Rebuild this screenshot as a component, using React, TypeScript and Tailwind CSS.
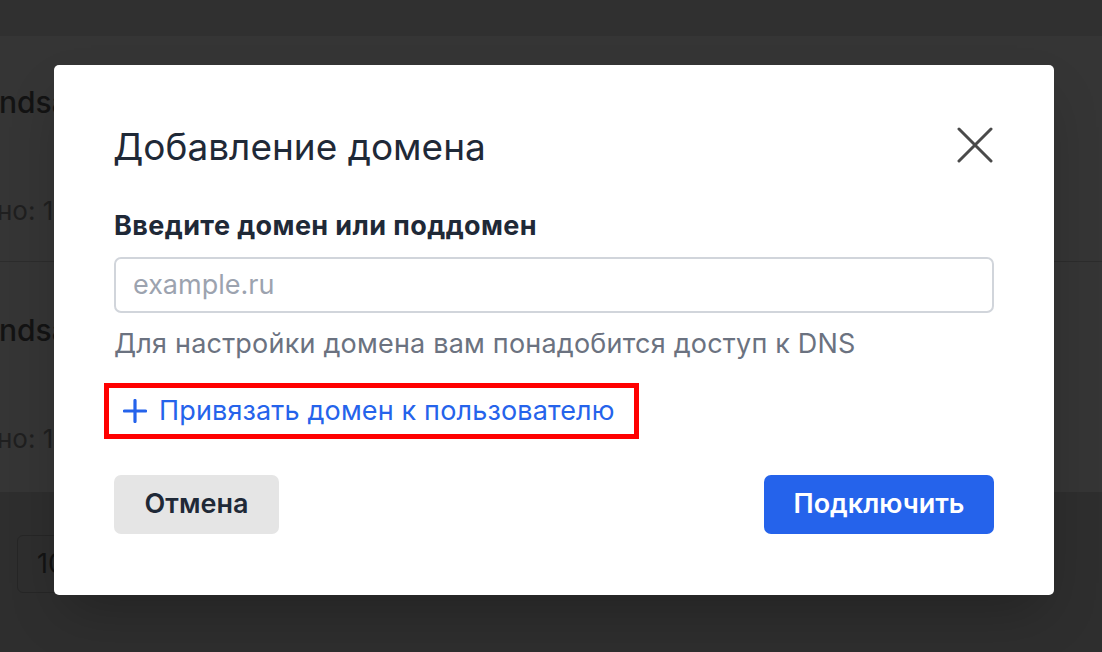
import React from "react";

export default function App() {
  return (
    <div
      className="relative w-[1102px] h-[652px] overflow-hidden bg-[#353535]"
      style={{ fontFamily: "Inter, 'Noto Sans', sans-serif" }}
    >
      {/* underlying page (dimmed) */}
      <div className="flex flex-col h-full">
        <div className="h-[36px] shrink-0 bg-[#303030]" />
        <div className="h-[226px] shrink-0 border-b border-[#2c2c2c] pt-[48px]">
          <div className="w-[54px] overflow-hidden">
            <div className="text-[30px] font-medium leading-[36px] text-[#131313] whitespace-nowrap ml-[-1px]">ndsa</div>
          </div>
          <div className="w-[54px] overflow-hidden mt-[76px]">
            <div className="text-[26px] leading-[30px] text-[#1f1f1f] whitespace-nowrap ml-[-3px]">но: 12</div>
          </div>
        </div>
        <div className="h-[230px] shrink-0 pt-[50px]">
          <div className="w-[54px] overflow-hidden">
            <div className="text-[30px] font-medium leading-[36px] text-[#131313] whitespace-nowrap ml-[-1px]">ndsa</div>
          </div>
          <div className="w-[54px] overflow-hidden mt-[76px]">
            <div className="text-[26px] leading-[30px] text-[#1f1f1f] whitespace-nowrap ml-[-3px]">но: 14</div>
          </div>
        </div>
        <div className="flex-1 pt-[43px] pl-[17px] bg-[#2e2e2e]">
          <div className="w-[80px] h-[58px] rounded-[6px] border border-[#262626] flex items-center pl-[19px] text-[27px] text-[#131313]">
            10
          </div>
        </div>
      </div>

      {/* modal */}
      <div className="absolute left-[54px] top-[65px] w-[1000px] h-[530px] bg-white rounded-[5px] shadow-2xl px-[60px] pt-[60px]">
        <div className="flex items-center justify-between h-[44px]">
          <h2 className="text-[37px] leading-[44px] font-normal text-[#1f2937] ml-[-1px] whitespace-nowrap">Добавление домена</h2>
          <svg width="36" height="36" viewBox="0 0 36 36" className="mr-[1px] mt-[-4px]">
            <path d="M2 2 L34 34 M34 2 L2 34" stroke="#4a4a4a" strokeWidth="3" strokeLinecap="round" />
          </svg>
        </div>
        <div className="mt-[41px] text-[27px] leading-[32px] font-bold tracking-[0.4px] text-[#1f2937] whitespace-nowrap">
          Введите домен или поддомен
        </div>
        <div className="mt-[15px] h-[56px] rounded-[7px] border-2 border-[#d1d5db] flex items-center px-[17px] text-[27px] text-[#9ca3af]">
          example.ru
        </div>
        <div className="mt-[15px] text-[27px] leading-[32px] tracking-[0.2px] text-[#6b7280] whitespace-nowrap">
          Для настройки домена вам понадобится доступ к DNS
        </div>
        <div className="mt-[23px] ml-[-10px] inline-flex items-center h-[56px] border-[5px] border-[#ff0000] pl-[14px] pr-[19px]">
          <svg width="24" height="24" viewBox="0 0 24 24">
            <path d="M12 1.5 V22.5 M1.5 12 H22.5" stroke="#2563eb" strokeWidth="3.2" strokeLinecap="round" />
          </svg>
          <span className="ml-[12px] text-[27px] leading-[32px] tracking-[0.15px] text-[#2563eb] whitespace-nowrap">Привязать домен к пользователю</span>
        </div>
        <div className="mt-[36px] flex justify-between">
          <button className="h-[59px] w-[165px] rounded-[7px] bg-[#e5e5e5] text-[27px] font-semibold text-[#1f2937]">
            Отмена
          </button>
          <button className="h-[59px] w-[230px] rounded-[7px] bg-[#2563eb] text-[27px] font-semibold text-white">
            Подключить
          </button>
        </div>
      </div>
    </div>
  );
}
